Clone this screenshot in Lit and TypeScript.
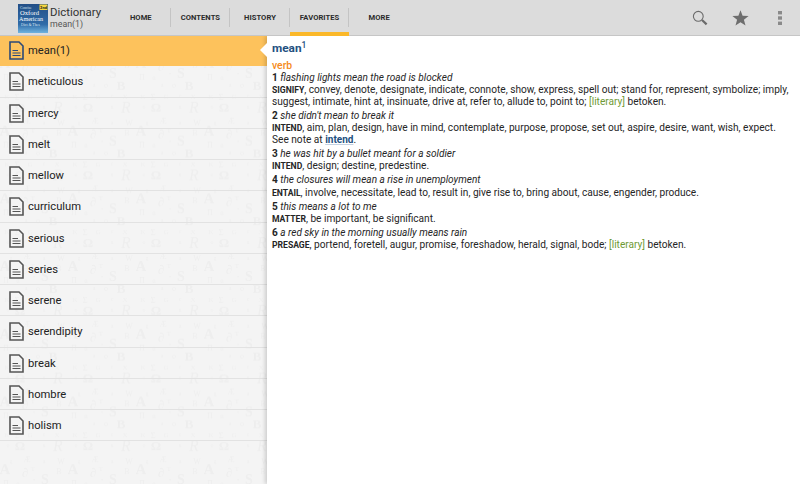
import { LitElement, html, css, svg } from "lit";
import { customElement } from "lit/decorators.js";

const WORDS = ["mean(1)","meticulous","mercy","melt","mellow","curriculum","serious","series","serene","serendipity","break","hombre","holism"];
const TABS = ["HOME","CONTENTS","HISTORY","FAVORITES","MORE"];

// [glyph, x, y-centre within the 68px tile, size, serif italic?]
const GLYPHS: [string, number, number, number, string?][] = [
  ["A",5,16,15],["∂",25,19,13],["T",33,15,7],["S",45,26,14],["B",59,18,8],
  ["Π",6,30,8],["ü",18,30,7],["•",34,27,6],["B",53,38,13],["o",38,38,8],["a",26,38,6],
  ["K",7,49,7],["Σ",17,50,9],["G",30,49,7],["c",44,49,6],["X",57,49,7],
  ["Ω",20,60,13],["R",58,60,16,"i"],["o",8,60,6],["n",44,60,6],
  ["Æ",27,6,8],["W",61,8,8],["g",11,8,6],["a",44,8,6],
];

@customElement("app-root")
export class AppRoot extends LitElement {
  static styles = css`
    :host { display: block; width: 800px; height: 484px; overflow: hidden; position: relative; font-family: Roboto, "Liberation Sans", sans-serif; color: #222; background: #f4f4f4; }
    .page { display: flex; flex-direction: column; height: 484px; }
    header { height: 35px; flex: none; display: flex; align-items: stretch; background: #dcdcdc; border-bottom: 1px solid #c6c6c6; box-sizing: content-box; position: relative; z-index: 3; }
    .brand { display: flex; width: 111px; flex: none; padding-left: 18px; box-sizing: border-box; align-items: center; gap: 2px; }
    .book { width: 30px; height: 29px; flex: none; display: block; margin-top: 1px; }
    .titles { display: flex; flex-direction: column; }
    .title { font-size: 11.4px; color: #333; line-height: 13px; }
    .sub { font-size: 8.8px; color: #555; line-height: 11px; }
    nav { display: flex; }
    .tab { width: 59.6px; display: flex; align-items: center; justify-content: center; font-size: 7.6px; font-weight: 700; color: #2b2b2b; box-sizing: border-box; position: relative; padding-bottom: 1px; letter-spacing: 0.05px; }
    .tab.div::after { content: ""; position: absolute; right: 0; top: 8px; height: 19px; width: 1px; background: #c4c4c4; }
    .tab.on::before { content: ""; position: absolute; left: 0; right: 0; bottom: -1px; height: 4px; background: #fbb829; }
    .actions { margin-left: auto; display: flex; }
    .act { width: 40px; display: flex; align-items: center; justify-content: center; }
    main { flex: 1; display: flex; min-height: 0; position: relative; }
    .side { width: 267px; flex: none; position: relative; margin-top: -1px; }
    .tex { position: absolute; left: 0; top: 0; width: 267px; height: 450px; display: block; }
    ul { list-style: none; margin: 0; padding: 0; position: relative; }
    li { height: 31.25px; box-sizing: border-box; border-bottom: 1px solid #e2e2e2; display: flex; align-items: center; padding: 1px 0 0 9px; gap: 4px; font-size: 11.2px; color: #222; }
    li.on { background: #fdc25c; border-bottom-color: #fdc25c; }
    .doc { width: 15px; height: 19px; flex: none; color: #555; }
    li.on .doc { color: #2c4a78; }
    article { flex: 1; background: #fff; position: relative; box-shadow: -2px 0 4px rgba(0,0,0,.16); padding: 5px 5px 0 5px; font-size: 10.15px; line-height: 12.1px; color: #262626; z-index: 1; }
    article::before { content: ""; position: absolute; left: -7px; top: 7px; border-style: solid; border-width: 7px 7px 7px 0; border-color: transparent #fff transparent transparent; }
    .head { font-size: 11.8px; font-weight: 700; color: #23507f; line-height: 15px; margin-bottom: 2px; }
    .head sup { font-size: 8.5px; font-weight: 500; line-height: 0; vertical-align: 4px; }
    .pos { color: #f58a20; font-weight: 500; font-size: 10.4px; margin-top: 3px; line-height: 13px; }
    .sense { margin-bottom: 1.9px; }
    .ex { font-style: italic; font-size: 10.05px; }
    .n { font-weight: 700; font-style: normal; }
    .key { font-weight: 700; font-size: 8.6px; }
    .link { color: #23507f; font-weight: 700; font-size: 10px; text-decoration: underline; text-decoration-color: #c4d2e2; }
    .lit { color: #6f9a35; }
  `;

  private doc() {
    return html`<svg class="doc" viewBox="0 0 15 19" fill="none" stroke="currentColor"><path d="M1 1H10L14 5V18H1Z" stroke-width="1.6"/><path d="M3.5 9.5H9M3.5 12H11.5M3.5 14.5H11.5" stroke-width="1.1"/></svg>`;
  }

  private book() {
    return html`<svg class="book" viewBox="0 0 30 29">
      <defs><linearGradient id="bk" x1="0" y1="0" x2="0" y2="1"><stop offset="0" stop-color="#234f86"/><stop offset=".7" stop-color="#2f6ba8"/><stop offset="1" stop-color="#6fb3de"/></linearGradient></defs>
      <rect width="30" height="29" fill="url(#bk)"/>
      <rect x="21.5" y="0.5" width="8" height="5.5" fill="#f5d63d"/>
      <text x="25.5" y="5" font-size="4" font-weight="700" text-anchor="middle" fill="#222" font-family="Roboto, sans-serif">2nd</text>
      <g fill="#fff" font-family="'Liberation Serif', serif">
        <text x="2" y="4.5" font-size="3.6" fill="#dfe8f2">Concise</text>
        <text x="2" y="10.5" font-size="6.6">Oxford</text>
        <text x="1" y="17" font-size="6.1">American</text>
        <text x="3" y="22" font-size="3.8" fill="#dfe8f2">Dict &amp; Thes</text>
      </g>
    </svg>`;
  }

  private texture() {
    return html`<svg class="tex" aria-hidden="true">
      <defs>
        <pattern id="tile" width="68" height="67.7" patternUnits="userSpaceOnUse" patternTransform="translate(0,12)">
          ${GLYPHS.map(([g, x, y, s, it]) => svg`<text x=${x} y=${y + s * 0.36} font-size=${s} text-anchor="middle" fill="#eeeeee" font-weight=${s >= 13 && g !== "R" ? 700 : 400} font-style=${it ? "italic" : "normal"} font-family="'Liberation Serif', serif">${g}</text>`)}
        </pattern>
      </defs>
      <rect width="267" height="450" fill="url(#tile)"/>
    </svg>`;
  }

  render() {
    return html`<div class="page">
      <header>
        <div class="brand">${this.book()}
          <div class="titles"><span class="title">Dictionary</span><span class="sub">mean(1)</span></div>
        </div>
        <nav>${TABS.map((t, i) => html`<div class="tab ${i < 4 ? "div" : ""} ${i === 3 ? "on" : ""}">${t}</div>`)}</nav>
        <div class="actions">
          <div class="act"><svg width="16" height="16" viewBox="0 0 16 16" fill="none" stroke="#6b6b6b"><circle cx="6.3" cy="6.3" r="4.9" stroke-width="1.1"/><path d="M10 10L14.6 14.4" stroke-width="2.2"/></svg></div>
          <div class="act"><svg width="17" height="16" viewBox="0 0 17 16"><path d="M8.5 0.3L10.6 5.8L16.6 6.1L11.9 9.8L13.5 15.6L8.5 12.3L3.5 15.6L5.1 9.8L0.4 6.1L6.4 5.8Z" fill="#6e6e6e"/></svg></div>
          <div class="act"><svg width="4" height="14" viewBox="0 0 4 14" fill="#8a8a8a"><rect y="0" width="4" height="3.4"/><rect y="5.3" width="4" height="3.4"/><rect y="10.6" width="4" height="3.4"/></svg></div>
        </div>
      </header>
      <main>
        <div class="side">${this.texture()}
          <ul>${WORDS.map((w, i) => html`<li class=${i === 0 ? "on" : ""}>${this.doc()}<span>${w}</span></li>`)}</ul>
        </div>
        <article>
          <div class="head">mean<sup>1</sup></div>
          <div class="pos">verb</div>
          <div class="sense"><div class="ex"><span class="n">1</span> flashing lights mean the road is blocked</div>
            <div><span class="key">SIGNIFY</span>, convey, denote, designate, indicate, connote, show, express, spell out; stand for, represent, symbolize; imply, suggest, intimate, hint at, insinuate, drive at, refer to, allude to, point to; <span class="lit">[literary]</span> betoken.</div></div>
          <div class="sense"><div class="ex"><span class="n">2</span> she didn't mean to break it</div>
            <div><span class="key">INTEND</span>, aim, plan, design, have in mind, contemplate, purpose, propose, set out, aspire, desire, want, wish, expect. See note at <span class="link">intend</span>.</div></div>
          <div class="sense"><div class="ex"><span class="n">3</span> he was hit by a bullet meant for a soldier</div>
            <div><span class="key">INTEND</span>, design; destine, predestine.</div></div>
          <div class="sense"><div class="ex"><span class="n">4</span> the closures will mean a rise in unemployment</div>
            <div><span class="key">ENTAIL</span>, involve, necessitate, lead to, result in, give rise to, bring about, cause, engender, produce.</div></div>
          <div class="sense"><div class="ex"><span class="n">5</span> this means a lot to me</div>
            <div><span class="key">MATTER</span>, be important, be significant.</div></div>
          <div class="sense"><div class="ex"><span class="n">6</span> a red sky in the morning usually means rain</div>
            <div><span class="key">PRESAGE</span>, portend, foretell, augur, promise, foreshadow, herald, signal, bode; <span class="lit">[literary]</span> betoken.</div></div>
        </article>
      </main>
    </div>`;
  }
}
